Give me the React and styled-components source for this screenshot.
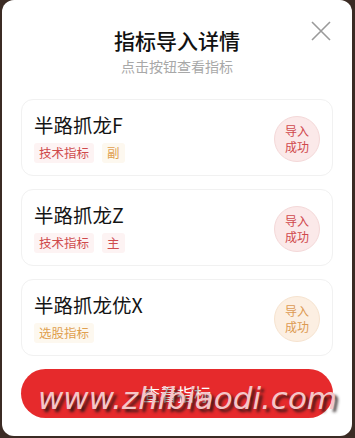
import React from "react";
import styled, { createGlobalStyle } from "styled-components";

const GlobalStyle = createGlobalStyle`
  html, body {
    margin: 0;
    padding: 0;
    background: #3b2b24;
  }
  body {
    font-family: "Noto Sans CJK SC", "Noto Sans", sans-serif;
  }
`;

const Modal = styled.div`
  position: relative;
  box-sizing: border-box;
  width: 350px;
  height: 436px;
  margin: 0 0 0 2px;
  padding: 0 19px 18px;
  background: #fff;
  border-radius: 12px;
  overflow: hidden;
  display: flex;
  flex-direction: column;
`;

const Header = styled.div`
  padding-top: 26px;
  display: flex;
  flex-direction: column;
  align-items: center;
`;

const Title = styled.div`
  font-size: 21px;
  line-height: 28px;
  font-weight: 500;
  color: #111;
`;

const Subtitle = styled.div`
  margin-top: 2px;
  font-size: 14px;
  line-height: 20px;
  color: #a8a8a8;
`;

const Close = styled.button`
  position: absolute;
  top: 21px;
  right: 21px;
  width: 20px;
  height: 20px;
  padding: 0;
  border: 0;
  background: none;
  display: flex;
`;

const List = styled.div`
  margin-top: 23px;
  display: flex;
  flex-direction: column;
  gap: 13px;
`;

const Card = styled.div`
  box-sizing: border-box;
  height: 77px;
  padding: 12px 12px 13px;
  border: 1px solid #f1f1f1;
  border-radius: 12px;
  display: flex;
  align-items: center;
  justify-content: space-between;
`;

const Info = styled.div`
  display: flex;
  flex-direction: column;
  align-self: flex-start;
`;

const Name = styled.div`
  font-size: 19.5px;
  line-height: 26px;
  color: #141414;
`;

const Tags = styled.div`
  margin-top: 5px;
  display: flex;
  gap: 8px;
`;

const palette = {
  red: { fg: "#cf4a4c", bg: "#fdf3f3" },
  orange: { fg: "#e0a050", bg: "#fdf8ef" },
};

const Tag = styled.span`
  padding: 0 5px;
  height: 20px;
  line-height: 20px;
  font-size: 12.5px;
  border-radius: 3px;
  color: ${(p) => palette[p.$tone].fg};
  background: ${(p) => palette[p.$tone].bg};
`;

const Badge = styled.div`
  box-sizing: border-box;
  width: 46px;
  height: 46px;
  margin-top: 4px;
  border-radius: 50%;
  display: flex;
  align-items: center;
  justify-content: center;
  text-align: center;
  font-size: 12px;
  line-height: 16px;
  color: ${(p) => (p.$tone === "orange" ? "#dc9a52" : "#d0484c")};
  background: ${(p) => (p.$tone === "orange" ? "#fcefe2" : "#fbe9e9")};
  border: 1px solid ${(p) => (p.$tone === "orange" ? "#f6e3cf" : "#f4d8d8")};
`;

const Button = styled.button`
  margin-top: 13px;
  height: 49px;
  border: 0;
  border-radius: 25px;
  background: #e62a2c;
  color: #fff;
  font-family: inherit;
  font-size: 17px;
`;

const Watermark = styled.div`
  position: absolute;
  left: 36px;
  top: 380px;
  font-family: "DejaVu Sans", sans-serif;
  font-style: italic;
  font-size: 31px;
  letter-spacing: 0px;
  color: #f4c6c8;
  text-shadow: 3px 3px 3px rgba(30, 20, 20, 0.85);
  pointer-events: none;
  white-space: nowrap;
`;

const items = [
  { name: "半路抓龙F", tone: "red", tags: [["技术指标", "red"], ["副", "orange"]] },
  { name: "半路抓龙Z", tone: "red", tags: [["技术指标", "red"], ["主", "red"]] },
  { name: "半路抓龙优X", tone: "orange", tags: [["选股指标", "orange"]] },
];

export default function App() {
  return (
    <>
      <GlobalStyle />
      <Modal>
        <Header>
          <Title>指标导入详情</Title>
          <Subtitle>点击按钮查看指标</Subtitle>
        </Header>
        <Close aria-label="close">
          <svg width="20" height="20" viewBox="0 0 20 20">
            <path d="M1 1L19 19M19 1L1 19" stroke="#9a9a9a" strokeWidth="1.6" />
          </svg>
        </Close>
        <List>
          {items.map((it) => (
            <Card key={it.name}>
              <Info>
                <Name>{it.name}</Name>
                <Tags>
                  {it.tags.map(([t, tone]) => (
                    <Tag key={t} $tone={tone}>{t}</Tag>
                  ))}
                </Tags>
              </Info>
              <Badge $tone={it.tone}>
                导入
                <br />
                成功
              </Badge>
            </Card>
          ))}
        </List>
        <Button>查看指标</Button>
        <Watermark>www.zhibiaodi.com</Watermark>
      </Modal>
    </>
  );
}
